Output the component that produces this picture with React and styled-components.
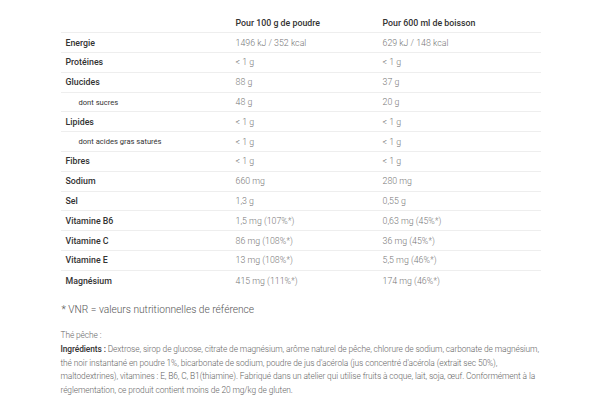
import React from "react";
import styled, { createGlobalStyle } from "styled-components";

const Global = createGlobalStyle`
  html, body { margin: 0; padding: 0; background: #fff; }
  body { font-family: Roboto, "Noto Sans", sans-serif; color: #333; }
`;

const Page = styled.div`
  width: 480px;
  margin: 0 auto;
  padding: 13px 0 0 1px;
`;

const Table = styled.table`
  width: 480px;
  border-collapse: collapse;
  table-layout: fixed;
  font-size: 8.8px;
`;

const Th = styled.th`
  text-align: left;
  font-weight: 500;
  color: #333;
  height: 19.8px;
  padding: 0 5px;
  box-sizing: border-box;
  width: ${(p) => p.$w}px;
`;

const Row = styled.tr`
  border-top: 1px solid #eee;
`;

const Label = styled.td`
  height: 19.8px;
  padding: 0 5px 0 ${(p) => (p.$sub ? 18 : 5)}px;
  box-sizing: border-box;
  font-weight: ${(p) => (p.$sub ? 400 : 500)};
  font-size: ${(p) => (p.$sub ? 7.6 : 8.8)}px;
  color: #333;
`;

const Value = styled.td`
  height: 19.8px;
  padding: 0 5px;
  box-sizing: border-box;
  font-weight: 300;
  color: #777;
`;

const Note = styled.p`
  margin: 14px 0 0 1px;
  font-size: 10.2px;
  font-weight: 300;
  color: #555;
`;

const Ingredients = styled.div`
  margin-top: 14px;
  font-size: 8.4px;
  letter-spacing: -0.1px;
  line-height: 13.7px;
  font-weight: 300;
  color: #666;
  width: 486px;
`;

const Strong = styled.b`
  font-weight: 500;
  color: #333;
`;

const rows = [
  ["Energie", "1496 kJ / 352 kcal", "629 kJ / 148 kcal"],
  ["Protéines", "< 1 g", "< 1 g"],
  ["Glucides", "88 g", "37 g"],
  ["dont sucres", "48 g", "20 g", true],
  ["Lipides", "< 1 g", "< 1 g"],
  ["dont acides gras saturés", "< 1 g", "< 1 g", true],
  ["Fibres", "< 1 g", "< 1 g"],
  ["Sodium", "660 mg", "280 mg"],
  ["Sel", "1,3 g", "0,55 g"],
  ["Vitamine B6", "1,5 mg (107%*)", "0,63 mg (45%*)"],
  ["Vitamine C", "86 mg (108%*)", "36 mg (45%*)"],
  ["Vitamine E", "13 mg (108%*)", "5,5 mg (46%*)"],
  ["Magnésium", "415 mg (111%*)", "174 mg (46%*)"],
];

export default function App() {
  return (
    <>
      <Global />
      <Page>
        <Table>
          <thead>
            <tr>
              <Th $w={170}></Th>
              <Th $w={147}>Pour 100 g de poudre</Th>
              <Th $w={163}>Pour 600 ml de boisson</Th>
            </tr>
          </thead>
          <tbody>
            {rows.map(([l, a, b, sub]) => (
              <Row key={l}>
                <Label $sub={sub}>{l}</Label>
                <Value>{a}</Value>
                <Value>{b}</Value>
              </Row>
            ))}
          </tbody>
        </Table>
        <Note>* VNR = valeurs nutritionnelles de référence</Note>
        <Ingredients>
          Thé pêche :
          <br />
          <Strong>Ingrédients :</Strong> Dextrose, sirop de glucose, citrate de magnésium, arôme naturel de pêche, chlorure de sodium, carbonate de magnésium, thé noir instantané en poudre 1%, bicarbonate de sodium, poudre de jus d'acérola (jus concentré d'acérola (extrait sec 50%), maltodextrines), vitamines : E, B6, C, B1(thiamine). Fabriqué dans un atelier qui utilise fruits à coque, lait, soja, œuf. Conformément à la réglementation, ce produit contient moins de 20 mg/kg de gluten.
        </Ingredients>
      </Page>
    </>
  );
}
